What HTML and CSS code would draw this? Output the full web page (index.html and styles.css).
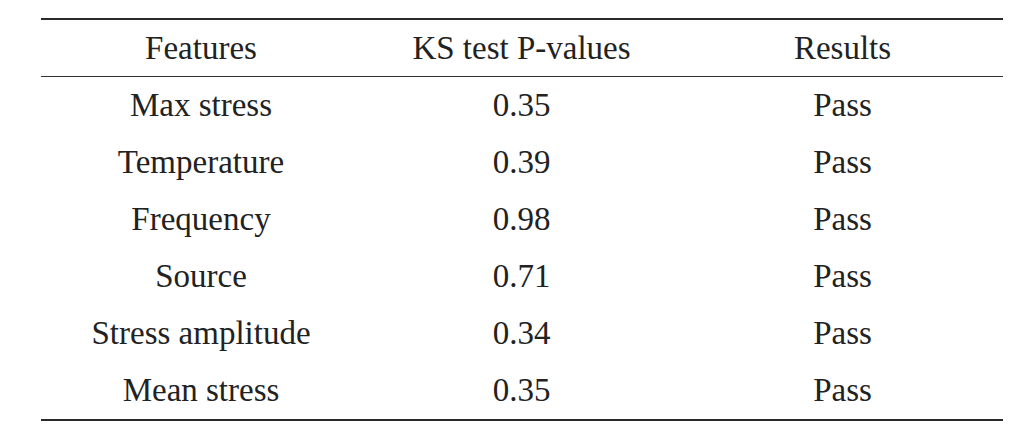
FILE: index.html
```html
<!DOCTYPE html>
<html>
<head>
<meta charset="utf-8">
<link rel="stylesheet" href="styles.css">
</head>
<body>
<div class="table">
  <div class="row head">
    <div class="cell">Features</div>
    <div class="cell">KS test P-values</div>
    <div class="cell">Results</div>
  </div>
  <div class="row">
    <div class="cell">Max stress</div>
    <div class="cell">0.35</div>
    <div class="cell">Pass</div>
  </div>
  <div class="row">
    <div class="cell">Temperature</div>
    <div class="cell">0.39</div>
    <div class="cell">Pass</div>
  </div>
  <div class="row">
    <div class="cell">Frequency</div>
    <div class="cell">0.98</div>
    <div class="cell">Pass</div>
  </div>
  <div class="row">
    <div class="cell">Source</div>
    <div class="cell">0.71</div>
    <div class="cell">Pass</div>
  </div>
  <div class="row">
    <div class="cell">Stress amplitude</div>
    <div class="cell">0.34</div>
    <div class="cell">Pass</div>
  </div>
  <div class="row">
    <div class="cell">Mean stress</div>
    <div class="cell">0.35</div>
    <div class="cell">Pass</div>
  </div>
</div>
</body>
</html>
```
FILE: styles.css
```css
html, body {
  margin: 0;
  padding: 0;
  background: #ffffff;
}
body {
  padding: 18px 27px 0 41px;
  font-family: "Liberation Serif", "Times New Roman", serif;
  font-size: 33px;
  color: #222222;
}
.table {
  width: 962px;
  border-top: 2px solid #2a2a2a;
  border-bottom: 2px solid #2a2a2a;
}
.row {
  display: grid;
  grid-template-columns: 320px 321px 321px;
  height: 57px;
  align-items: center;
}
.row.head {
  height: 56px;
  border-bottom: 1px solid #333333;
}
.cell {
  text-align: center;
  line-height: 1;
}
```
